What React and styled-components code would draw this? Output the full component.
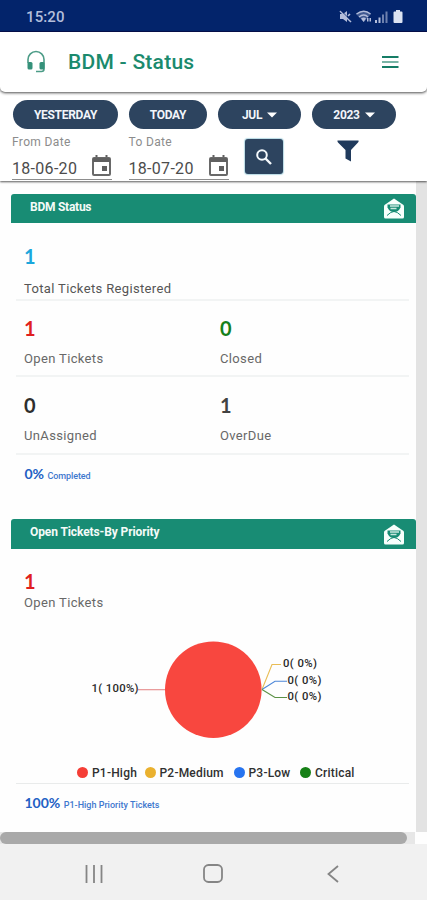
import React from "react";
import styled, { createGlobalStyle } from "styled-components";

const GlobalStyle = createGlobalStyle`
  * { box-sizing: border-box; }
  body { margin: 0; background: #fff; font-family: Roboto, sans-serif; }
`;

const Screen = styled.div`
  width: 427px;
  height: 900px;
  display: flex;
  flex-direction: column;
  overflow: hidden;
  background: #fefefe;
`;

const StatusBar = styled.div`
  height: 32px;
  flex: none;
  display: flex;
  align-items: center;
  justify-content: space-between;
  padding: 2px 22px 0 26px;
  background: #03246b;
  border-bottom: 1px solid #06104f;
`;

const Clock = styled.span`
  font-size: 15px;
  font-weight: 500;
  letter-spacing: 0.1px;
  color: #b4bedb;
`;

const Header = styled.header`
  height: 60px;
  flex: none;
  display: flex;
  align-items: center;
  padding: 0 28px 0 26px;
  background: #fff;
  border-radius: 0 0 5px 5px;
  box-shadow: 0 1px 3px rgba(0, 0, 0, 0.7);
  z-index: 2;
`;

const Title = styled.h1`
  flex: 1;
  margin: 0 0 0 21px;
  font-size: 21px;
  line-height: 28px;
  font-weight: 500;
  letter-spacing: 0.25px;
  color: #1b8a6d;
`;

const Filters = styled.section`
  height: 89px;
  flex: none;
  padding: 8px 12px 0;
  background: #fff;
  box-shadow: 0 1px 2px rgba(0, 0, 0, 0.65);
  z-index: 1;
`;

const PillRow = styled.div`
  display: grid;
  grid-template-columns: 105px 78px 83px 84px;
  column-gap: 11px;
  padding-left: 1px;
`;

const Pill = styled.button`
  height: 29px;
  display: flex;
  align-items: center;
  justify-content: center;
  gap: 5px;
  padding: 0;
  border: 0;
  border-radius: 15px;
  background: #2d445f;
  color: #f2f5fa;
  font: 700 12px Roboto, sans-serif;
  letter-spacing: ${(p) => p.$tracking || "-0.3px"};
`;

const FieldRow = styled.div`
  display: flex;
  align-items: flex-start;
  height: 51px;
`;

const Field = styled.label`
  width: 100px;
  height: 51px;
  margin-right: 16.5px;
  display: flex;
  flex-direction: column;
  border-bottom: 1px solid #8d8d8d;
`;

const FieldLabel = styled.span`
  padding-top: 5px;
  font-size: 12px;
  line-height: 17px;
  letter-spacing: 0.35px;
  color: #8c8c8c;
`;

const FieldValue = styled.span`
  display: flex;
  justify-content: space-between;
  padding-right: 1px;
  font-size: 16px;
  line-height: 35px;
  letter-spacing: 0.3px;
  color: #4c4c4c;
  svg { margin-top: 4px; }
`;

const SearchButton = styled.button`
  width: 38px;
  height: 35px;
  margin-top: 10px;
  padding: 0;
  display: grid;
  place-items: center;
  border: 0;
  border-radius: 3px;
  background: #2d445f;
  box-shadow: 0 0 1px 1px #b8dbe5;
`;

const FilterButton = styled.button`
  margin: 11px 0 0 54px;
  padding: 0;
  border: 0;
  background: none;
  line-height: 0;
`;

const Viewport = styled.div`
  height: 651px;
  flex: none;
  display: grid;
  grid-template-columns: 416px 11px;
`;

const Cards = styled.main`
  padding: 13px 0 0 11px;
`;

const Track = styled.div`
  background: #e3e3e3;
`;

const Card = styled.section`
  height: ${(p) => p.$height};
`;

const CardHeader = styled.div`
  height: ${(p) => p.$height};
  display: flex;
  align-items: center;
  justify-content: space-between;
  padding: 0 11px 0 19px;
  border-radius: 3px 3px 0 0;
  background: #188c74;
`;

const CardTitle = styled.h2`
  margin: -4px 0 0;
  font-size: 12px;
  line-height: 18px;
  font-weight: 700;
  letter-spacing: ${(p) => p.$tracking};
  color: #f4fbf8;
`;

const StatRow = styled.div`
  height: ${(p) => p.$height};
  display: grid;
  grid-template-columns: 196px 1fr;
  margin: 0 7px 0 5px;
  padding: ${(p) => p.$top} 0 0 8px;
  border-bottom: ${(p) => (p.$plain ? "0" : "2px solid #f2f4f4")};
`;

const Stat = styled.div`
  display: flex;
  flex-direction: column;
  gap: ${(p) => p.$gap || "9px"};
`;

const StatValue = styled.span`
  font: 700 20px/24px Lato, sans-serif;
  color: ${(p) => p.$color};
`;

const StatLabel = styled.span`
  font-size: 13px;
  line-height: 20px;
  letter-spacing: ${(p) => p.$tracking || "0.35px"};
  color: ${(p) => p.$color || "#686868"};
`;

const Summary = styled.p`
  margin: 0;
  padding: 8px 0 0 13.5px;
  font: 700 ${(p) => p.$size || "14px"}/22px Lato, sans-serif;
  color: #2360c4;
`;

const SummaryNote = styled.span`
  font: 500 ${(p) => p.$size} Roboto, sans-serif;
  letter-spacing: ${(p) => p.$tracking};
  color: #3e78ce;
`;

const PieChart = styled.svg`
  display: block;
  font: 500 11.3px Roboto, sans-serif;
`;

const Legend = styled.div`
  height: 22px;
  margin: 0 7px 0 5px;
  padding-left: 61px;
  display: flex;
  align-items: center;
  border-bottom: 1px solid #e9ebeb;
`;

const LegendItem = styled.span`
  width: ${(p) => p.$width};
  display: flex;
  align-items: center;
  gap: 4px;
  font-size: 12px;
  font-weight: 500;
  letter-spacing: 0.2px;
  white-space: nowrap;
  color: #303030;
  &::before {
    content: "";
    width: 11px;
    height: 11px;
    flex: none;
    border-radius: 50%;
    background: ${(p) => p.$color};
  }
`;

const ScrollArea = styled.div`
  height: 12px;
  flex: none;
  width: 415px;
  background: #e7e7e7;
`;

const ScrollThumb = styled.div`
  width: 407px;
  height: 12px;
  border-radius: 6px;
  background: #a9a9a9;
`;

const NavBar = styled.nav`
  flex: 1;
  display: grid;
  grid-template-columns: 120px 118px 122px;
  justify-content: center;
  place-items: center;
  padding: 3px 0 0;
  background: #f1f1f1;
`;

const StatusIcons = () => (
  <svg width="66" height="15" viewBox="0 0 66 15" fill="#b4bedb">
    <path d="M1 5h3l4-3v11l-4-3H1z" />
    <path d="M1 2l11 11M9 7l2-2" stroke="#b4bedb" strokeWidth="1.6" />
    <path d="M1 .5l11 11" stroke="#03246b" strokeWidth=".8" />
    <path d="M17 5q8-6 15 0l-7 8z" opacity=".35" />
    <path d="M17.5 5q7.5-5.5 14 0M20 8q5-4 9 0" fill="none" stroke="#b4bedb" strokeWidth="1.4" />
    <path d="M22 9.5q3-2 5 0L24.5 13zM28 9h1.5v3.5H28zM30.500 9H32v3.5h-1.500z" />
    <path d="M36 11h2v3h-2zM39.500 8.500h2V14h-2z" />
    <path d="M43 5.500h2V14h-2zM46.500 2.500h2V14h-2z" opacity=".6" />
    <path d="M57 1h4v1.500h1.500q1 0 1 1V13q0 1-1 1h-7q-1 0-1-1V3.500q0-1 1-1H57z" fill="#dce3f2" />
  </svg>
);

const HeadsetIcon = () => (
  <svg width="21" height="24" viewBox="0 0 21 24">
    <path d="M2 13V9.500a8 8 0 0 1 16 0V19q0 2.500-2.500 2.500H10" fill="none" stroke="#4c9c87" strokeWidth="1.6" />
    <rect x="1.500" y="12" width="5" height="7.500" rx="1.500" fill="#35917a" />
    <rect x="13.500" y="12" width="5" height="7.500" rx="1.500" fill="#35917a" />
  </svg>
);

const MenuIcon = () => (
  <svg width="17" height="12" viewBox="0 0 17 12">
    <path d="M0 1h16.500M0 11h16.500" stroke="#167d66" strokeWidth="1.800" />
    <path d="M0 6h16.500" stroke="#6cad9d" strokeWidth="1.800" />
  </svg>
);

const Caret = () => (
  <svg width="10" height="6" viewBox="0 0 10 6"><path d="M0 .5h10L5 5.500z" fill="#fff" /></svg>
);

const CalendarIcon = () => (
  <svg width="19" height="22" viewBox="0 0 19 22">
    <path d="M4.500 0v4M14.500 0v4" stroke="#606060" strokeWidth="2" />
    <rect x="1" y="3" width="17" height="17" rx="1" fill="none" stroke="#696969" strokeWidth="2" />
    <path d="M1 3h17v4H1z" fill="#606060" />
    <path d="M10 11h5v5h-5z" fill="#606060" />
  </svg>
);

const SearchIcon = () => (
  <svg width="18" height="18" viewBox="0 0 18 18" fill="none" stroke="#f5fafd">
    <circle cx="7" cy="7" r="4.800" strokeWidth="2" />
    <path d="M10.500 10.500L16 16" strokeWidth="2.400" />
  </svg>
);

const FunnelIcon = () => (
  <svg width="22" height="22" viewBox="0 0 22 22">
    <path d="M.5.500h21q.500 1-.5 2L14 10v11.500l-5.500-3V10L1 2.500Q.2 1.500.5.500z" fill="#203a5c" />
  </svg>
);

const MailIcon = () => (
  <svg width="22" height="21" viewBox="0 0 22 21">
    <path d="M11 .5l9.500 6.500q.5.500.5 1.500V19q0 1.500-1.500 1.500h-17Q1 20.500 1 19V8.500Q1 7.500 1.500 7z" fill="#f7fffc" />
    <path d="M4.500 6.500h13v3q-2 4.500-6.500 4.500T4.500 9.500z" fill="#188c74" />
    <path d="M7 8h9M7.500 10.500h6" stroke="#c9e8df" strokeWidth="1.300" />
    <path d="M4 17.500q4-4 7-4t7 4" fill="none" stroke="#188c74" strokeWidth="1" />
  </svg>
);

function DateField({ label, value }) {
  return (
    <Field>
      <FieldLabel>{label}</FieldLabel>
      <FieldValue>{value}<CalendarIcon /></FieldValue>
    </Field>
  );
}

export default function App() {
  return (
    <Screen>
      <GlobalStyle />
      <StatusBar><Clock>15:20</Clock><StatusIcons /></StatusBar>
      <Header><HeadsetIcon /><Title>BDM - Status</Title><MenuIcon /></Header>
      <Filters>
        <PillRow>
          <Pill>YESTERDAY</Pill>
          <Pill>TODAY</Pill>
          <Pill>JUL<Caret /></Pill>
          <Pill>2023<Caret /></Pill>
        </PillRow>
        <FieldRow>
          <DateField label="From Date" value="18-06-20" />
          <DateField label="To Date" value="18-07-20" />
          <SearchButton aria-label="Search"><SearchIcon /></SearchButton>
          <FilterButton aria-label="Filter"><FunnelIcon /></FilterButton>
        </FieldRow>
      </Filters>
      <Viewport>
        <Cards>
          <Card $height="325px">
            <CardHeader $height="29px"><CardTitle $tracking="-0.25px">BDM Status</CardTitle><MailIcon /></CardHeader>
            <StatRow $height="78px" $top="21px">
              <Stat $gap="11px">
                <StatValue $color="#1ba7dc">1</StatValue>
                <StatLabel $color="#555">Total Tickets Registered</StatLabel>
              </Stat>
            </StatRow>
            <StatRow $height="76px" $top="15px">
              <Stat><StatValue $color="#e01f1f">1</StatValue><StatLabel>Open Tickets</StatLabel></Stat>
              <Stat><StatValue $color="#16801b">0</StatValue><StatLabel>Closed</StatLabel></Stat>
            </StatRow>
            <StatRow $height="78px" $top="16px">
              <Stat><StatValue $color="#2e2e2e">0</StatValue><StatLabel>UnAssigned</StatLabel></Stat>
              <Stat><StatValue $color="#424242">1</StatValue><StatLabel>OverDue</StatLabel></Stat>
            </StatRow>
            <Summary>0% <SummaryNote $size="9px" $tracking="-0.1px">Completed</SummaryNote></Summary>
          </Card>
          <Card $height="313px">
            <CardHeader $height="30px"><CardTitle $tracking="-0.1px">Open Tickets-By Priority</CardTitle><MailIcon /></CardHeader>
            <StatRow $height="68px" $top="20px" $plain>
              <Stat $gap="0px"><StatValue $color="#e01f1f">1</StatValue><StatLabel>Open Tickets</StatLabel></Stat>
            </StatRow>
            <PieChart width="405" height="145" viewBox="11 617 405 145">
              <circle cx="213.300" cy="689.700" r="48.300" fill="#f8473f" />
              <g fill="none" strokeWidth="1.100">
                <path d="M138 689.700h27" stroke="#e58b8b" />
                <path d="M262 689.500l10-25h9" stroke="#e9bd55" />
                <path d="M262 689.500l13-8.300h12" stroke="#4d87d8" />
                <path d="M262 689.500l13 8h12" stroke="#5b9145" />
              </g>
              <g fill="#292929">
                <text x="91.500" y="692" textLength="47">1( 100%)</text>
                <text x="283" y="667" textLength="34">0( 0%)</text>
                <text x="287.500" y="683.500" textLength="34">0( 0%)</text>
                <text x="287.500" y="700" textLength="34">0( 0%)</text>
              </g>
            </PieChart>
            <Legend>
              <LegendItem $width="67.5px" $color="#f53e36">P1-High</LegendItem>
              <LegendItem $width="89px" $color="#eab12f">P2-Medium</LegendItem>
              <LegendItem $width="66.500px" $color="#2774f0">P3-Low</LegendItem>
              <LegendItem $width="60px" $color="#168016">Critical</LegendItem>
            </Legend>
            <Summary>100% <SummaryNote $size="9px" $tracking="0px">P1-High Priority Tickets</SummaryNote></Summary>
          </Card>
        </Cards>
        <Track />
      </Viewport>
      <ScrollArea><ScrollThumb /></ScrollArea>
      <NavBar>
        <svg width="18" height="18" viewBox="0 0 18 18"><path d="M1.500 0v18M9 0v18M16.500 0v18" stroke="#858585" strokeWidth="1.800" /></svg>
        <svg width="20" height="19" viewBox="0 0 20 19"><rect x="1" y="1" width="18" height="17" rx="4.500" fill="none" stroke="#858585" strokeWidth="1.800" /></svg>
        <svg width="12" height="18" viewBox="0 0 12 18"><path d="M11 1L1.500 9l9.500 8" fill="none" stroke="#858585" strokeWidth="1.800" /></svg>
      </NavBar>
    </Screen>
  );
}
